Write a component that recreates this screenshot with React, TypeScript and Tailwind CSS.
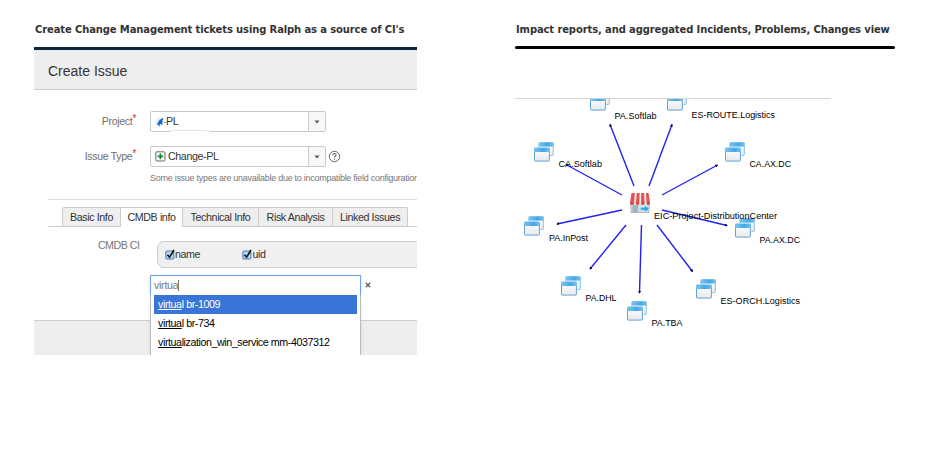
import type { ReactNode } from "react";

const arial = "font-['Liberation_Sans',Arial,sans-serif]";

function Heading({ children, spacing }: { children: ReactNode; spacing: string }) {
  return (
    <h2 className={`ml-px h-[24px] whitespace-nowrap font-['DejaVu_Sans',Verdana,sans-serif] text-[10px] leading-[14px] font-bold text-[#333] ${spacing}`}>
      {children}
    </h2>
  );
}

function SelectBox({ icon, label }: { icon: ReactNode; label: string }) {
  return (
    <div className="flex h-[21px] w-[176px] overflow-hidden rounded-[2px] border border-[#c8c8c8] bg-white">
      <div className="flex flex-1 items-center pl-1 text-[10.7px] tracking-[-0.4px] text-[#333]">
        {icon}
        <span className="whitespace-nowrap">{label}</span>
      </div>
      <div className="flex w-[17px] items-center justify-center border-l border-[#ccc] bg-[#f7f7f7]">
        <svg width="6" height="4" viewBox="0 0 6 4"><path d="M.5 .5h5L3 3.5z" fill="#555" /></svg>
      </div>
    </div>
  );
}

function FieldLabel({ children }: { children: ReactNode }) {
  return (
    <div className="flex w-[102px] items-center justify-end whitespace-nowrap text-[10.6px] tracking-[-0.33px] text-[#707070]">
      {children}
      <span className="-mt-[5px] text-[10px] leading-none text-[#e0301e]">*</span>
    </div>
  );
}

function Check({ label }: { label: string }) {
  return (
    <div className="flex w-[77.5px] items-center text-[10.7px] tracking-[-0.45px] text-[#333]">
      <svg className="-ml-[0.5px]" width="10.5" height="11" viewBox="0 0 10 11">
        <rect x=".6" y="2" width="8" height="8" rx="1" fill="#b4d6f8" stroke="#4a78ae" />
        <path d="M2.2 5.8 4.3 8.2 8.8 1" fill="none" stroke="#111" strokeWidth="1.6" />
      </svg>
      {label}
    </div>
  );
}

const tabs = [
  { label: "Basic Info", width: "w-[59px]" },
  { label: "CMDB info", width: "w-[62px]", active: true },
  { label: "Technical Info", width: "w-[76px]" },
  { label: "Risk Analysis", width: "w-[74px]" },
  { label: "Linked Issues", width: "w-[75px]" },
];

function IssueForm() {
  return (
    <div className={`relative h-[308px] w-[383px] overflow-hidden bg-white ${arial}`}>
      <div className="h-[3px] bg-[#0a2540]" />
      <div className="flex h-[40px] items-center border-b border-[#ccc] bg-[#eee] pt-1 pl-[14px] text-[14px] text-[#333]">
        Create Issue
      </div>
      <div className="mt-[21px] flex gap-[14px]">
        <FieldLabel>Project</FieldLabel>
        <SelectBox
          label="PL"
          icon={
            <svg className="shrink-0" width="11" height="12" viewBox="0 0 11 12">
              <circle cx="5" cy="6" r="4.6" fill="#e4f0fb" />
              <path d="M8.5 1.5 4.5 4 1.5 9l2-.4L4 11l1.2-3.2L7.2 9l.2-4z" fill="#1868c8" />
              <path d="M9 6.5h2" stroke="#777" strokeWidth=".8" />
            </svg>
          }
        />
      </div>
      <div className="mt-[14px] flex items-center gap-[14px]">
        <FieldLabel>Issue Type</FieldLabel>
        <SelectBox
          label="Change-PL"
          icon={
            <svg className="mr-[2px] shrink-0" width="11" height="11" viewBox="0 0 11 11">
              <rect x=".8" y=".8" width="9.2" height="9.2" rx="1.2" fill="#fff" stroke="#666" />
              <path d="M5.4 2.5v5.8M2.5 5.4h5.8" stroke="#168a2a" strokeWidth="1.8" />
            </svg>
          }
        />
        <svg className="-ml-[12px]" width="13" height="13" viewBox="0 0 13 13">
          <circle cx="6.5" cy="6.5" r="5.2" fill="none" stroke="#666" />
          <path d="M4.8 5.2c0-2.4 3.5-2.2 3.3-.2-.1 1.1-1.6 1.2-1.6 2.4M6.5 8.5v1.3" fill="none" stroke="#666" strokeWidth="1.1" />
        </svg>
      </div>
      <div className="mt-[5px] ml-[116px] h-[12px] whitespace-nowrap text-[9px] leading-[12px] tracking-[-0.27px] text-[#777]">
        Some issue types are unavailable due to incompatible field configuration
      </div>
      <div className="mt-[15px] ml-[14px] border-t border-[#ddd]" />
      <div className="mt-[7px] ml-[14px] flex h-[20px] border-b border-[#ccc] pl-[14px]">
        {tabs.map((tab, i) => (
          <div
            key={tab.label}
            className={`flex shrink-0 items-center justify-center border-t border-r border-[#ccc] text-[10.7px] tracking-[-0.4px] whitespace-nowrap text-[#333] ${tab.width} ${i === 0 ? "rounded-tl-[2px] border-l" : ""} ${i === 4 ? "rounded-tr-[2px]" : ""} ${tab.active ? "h-[20px] bg-white" : "h-[19px] bg-[#eee]"}`}
          >
            {tab.label}
          </div>
        ))}
      </div>
      <div className="mt-[14px] flex">
        <div className="w-[105.5px] text-right text-[10.7px] leading-[8px] tracking-[-0.5px] text-[#777]">CMDB CI</div>
        <div className="-mr-3 ml-[17.5px] flex h-[27px] flex-1 items-center rounded-[7px] border border-[#ccc] bg-[#f0f0f0] pl-[7px]">
          <Check label="name" />
          <Check label="uid" />
        </div>
      </div>
      <div className="mt-[52px] h-[36px] border-t border-[#ccc] bg-[#eee]" />
      <div className="absolute top-[228px] left-[116px] w-[211px]">
        <div className="flex h-[20px] items-center border border-b-0 border-[#6ba2ef] bg-white pl-[3px] text-[10.7px] tracking-[-0.3px] text-[#777] shadow-sm">
          <span>virtua</span>
          <span className="h-[11px] w-px bg-[#777]" />
        </div>
        <div className="h-[61px] border border-t-0 border-[#bbb] bg-white px-[3px] text-[10.7px] tracking-[-0.42px] text-black shadow-md">
          {[" br-1009", " br-734", "ization_win_service mm-4037312"].map((rest, i) => (
            <div key={rest} className={`flex h-[19px] items-center whitespace-pre pl-[4px] ${i === 0 ? "bg-[#3875d7] text-white" : ""}`}>
              <span className="underline underline-offset-1">virtua</span>l{rest}
            </div>
          ))}
        </div>
      </div>
      <svg className="absolute top-[235px] left-[331px]" width="6" height="6" viewBox="0 0 6 6">
        <path d="m.8 .8 4.4 4.4M5.2 .8.8 5.2" stroke="#666" strokeWidth="1.5" />
      </svg>
      <div className="absolute top-[83px] left-[136px] h-[3px] w-[40px] rounded-t-full border-t border-[#e4e4e4] bg-white" />
    </div>
  );
}

const nodes = [
  { x: 590, y: 91, label: "PA.Softlab", tx: 614.5, ty: 119, w: 42 },
  { x: 667, y: 91, label: "ES-ROUTE.Logistics", tx: 691.5, ty: 118, w: 83.5 },
  { x: 534, y: 142, label: "CA.Softlab", tx: 558.5, ty: 167.5, w: 43.5 },
  { x: 725, y: 142, label: "CA.AX.DC", tx: 749.5, ty: 167.5, w: 41.5 },
  { x: 524, y: 216, label: "PA.InPost", tx: 549, ty: 241.5, w: 39 },
  { x: 735, y: 218, label: "PA.AX.DC", tx: 759.5, ty: 243.5, w: 40.5 },
  { x: 561, y: 276, label: "PA.DHL", tx: 585.5, ty: 301.5, w: 31 },
  { x: 696, y: 279, label: "ES-ORCH.Logistics", tx: 720.5, ty: 304.5, w: 79.5 },
  { x: 627, y: 301, label: "PA.TBA", tx: 651.5, ty: 326.5, w: 31 },
];

const edges = [
  [634, 186, 610, 124.5],
  [649, 186, 672, 124.5],
  [622, 195, 566, 164.5],
  [662, 195, 717.5, 165],
  [622, 210, 557, 224],
  [662, 210, 727, 225.5],
  [626, 225, 590, 269],
  [641.5, 225, 639.5, 293],
  [657, 225, 692.5, 271.5],
];

function WindowPair({ x, y }: { x: number; y: number }) {
  return (
    <g transform={`translate(${x} ${y})`}>
      <rect x="5" y=".8" width="14.3" height="12.7" rx=".8" fill="url(#pane)" stroke="#8fc0e4" />
      <path d="M4.6 .4h15v4.2h-15z" fill="url(#bar)" />
      <rect x="-.4" y="5.2" width="16.8" height="14.6" rx="1" fill="#fff" />
      <rect x=".5" y="6.2" width="14.9" height="12.9" rx=".8" fill="url(#pane)" stroke="#62a3d3" />
      <path d="M.2 5.8h15.6V10H.2z" fill="url(#bar)" />
    </g>
  );
}

function ImpactMap() {
  return (
    <svg className="mt-[49px] block" width="316" height="240" viewBox="515 98 316 240">
      <defs>
        <linearGradient id="pane" x2="0" y2="1">
          <stop stopColor="#fff" /><stop offset="1" stopColor="#e6e9ee" />
        </linearGradient>
        <linearGradient id="bar">
          <stop stopColor="#7cc6f0" /><stop offset=".6" stopColor="#41a8e6" /><stop offset="1" stopColor="#79c3ee" />
        </linearGradient>
        <marker id="tip" viewBox="0 0 4 4" refX="3" refY="2" markerWidth="3" markerHeight="3" markerUnits="userSpaceOnUse" orient="auto">
          <path d="M0 0 4 2 0 4z" fill="#000040" />
        </marker>
      </defs>
      {nodes.map((n) => <WindowPair key={n.label} x={n.x} y={n.y} />)}
      <path d="M515 98h316" stroke="#fff" />
      <path d="M515 98.5h316" stroke="#d4d4d4" />
      {edges.map(([x1, y1, x2, y2]) => (
        <line key={`${x1}-${x2}`} x1={x1} y1={y1} x2={x2} y2={y2} stroke="#2222f4" strokeWidth="1.4" markerEnd="url(#tip)" />
      ))}
      <g transform="translate(630 193)">
        <path d="M1 8h18v11.5H1z" fill="#d3d8dc" stroke="#b3aaa4" strokeWidth=".8" />
        <path d="M2.5 12h5.5v7.3H2.5z" fill="#a3b4c0" />
        <path d="M9.5 12h8v4h-8z" fill="#c5e6f3" />
        <path d="M1.5 0h17L20 9.5H0z" fill="#f6e9e8" />
        <path d="M1.5 0h3.3L4 10H0zM6.8 0h2.8L9.3 10H5.9zM11.3 0h2.6L14.6 10h-3.5zM16 0h2.5L20 10h-3.4z" fill="#e65252" />
        <path d="M0 9h4v1a2 2 0 0 1-4 0zM5.8 9h3.5v1a1.75 2 0 0 1-3.5 0zM11.1 9h3.5v1a1.75 2 0 0 1-3.5 0zM16.6 9H20v1a1.7 2 0 0 1-3.4 0z" fill="#d94444" />
        <path d="M4 9h1.8v1a.9 1.5 0 0 1-1.8 0zM9.3 9h1.8v1a.9 1.5 0 0 1-1.8 0zM14.6 9h2v1a1 1.5 0 0 1-2 0z" fill="#eadada" />
        <path d="M10.3 14.2h4.3V12l5 3.8-5 3.7v-2.3h-4.3z" fill="#35a5df" stroke="#e4f7ff" strokeWidth=".6" />
      </g>
      <g className={arial} fontSize="9.6" fill="#000">
        {nodes.map((n) => (
          <text key={n.label} x={n.tx} y={n.ty - 0.5} textLength={n.w} lengthAdjust="spacingAndGlyphs">{n.label}</text>
        ))}
        <text x="654" y="218.5" textLength="123" lengthAdjust="spacingAndGlyphs">EIC-Project-DistributionCenter</text>
      </g>
    </svg>
  );
}

export default function App() {
  return (
    <main className="flex h-[473px] w-[929px] overflow-hidden bg-white pt-[23px] pl-[34px]">
      <section className="w-[481px]">
        <Heading spacing="tracking-[-0.125px]">Create Change Management tickets using Ralph as a source of CI's</Heading>
        <IssueForm />
      </section>
      <section className="w-[380px]">
        <Heading spacing="tracking-[-0.12px]">Impact reports, and aggregated Incidents, Problems, Changes view</Heading>
        <div className="-mt-[1px] h-[3px] rounded-full bg-black" />
        <ImpactMap />
      </section>
    </main>
  );
}
